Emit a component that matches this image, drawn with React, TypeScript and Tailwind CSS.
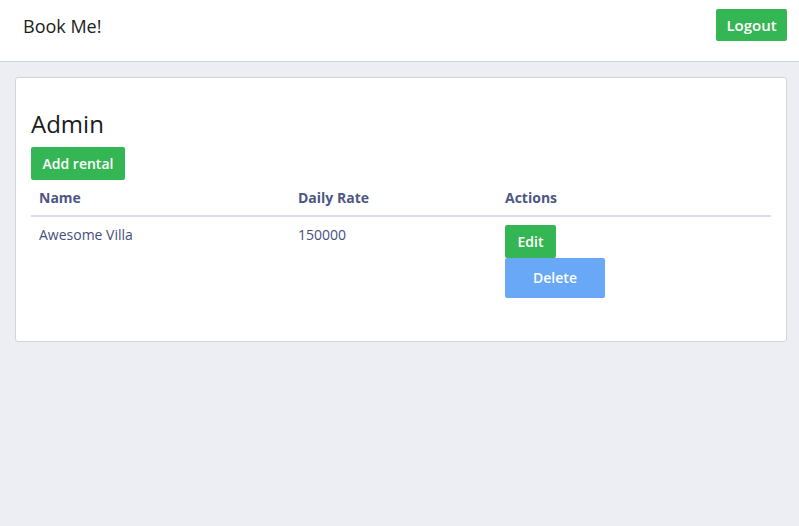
export default function App() {
  const rentals = [{ name: "Awesome Villa", dailyRate: 150000 }];

  return (
    <div
      className="min-h-[526px] bg-[#edeef3] text-[#222]"
      style={{ fontFamily: '"Open Sans", sans-serif' }}
    >
      <nav className="h-[62px] bg-white border-b border-[#cfd1d8] flex items-start justify-between pl-[23px] pr-3">
        <span className="mt-[14px] text-[18px] leading-6 text-[#1c1c1c]">Book Me!</span>
        <button className="mt-[9px] h-8 w-[71px] rounded-[2px] bg-[#35b654] text-white text-[15px] font-semibold">
          Logout
        </button>
      </nav>

      <main className="pt-[15px] pl-[15px] pr-3">
        <div className="bg-white border border-[#d3d4da] rounded-[3px] px-[15px] pt-[30px] pb-[43px]">
          <h1 className="text-[24px] leading-8 text-[#1a1a1a]">Admin</h1>
          <button className="mt-[7px] h-[33px] w-[94px] rounded-[2px] bg-[#35b654] text-white text-[14px] font-semibold">
            Add rental
          </button>
          <table className="w-full text-[14px] leading-5 text-left">
            <thead>
              <tr className="border-b-2 border-[#dcdde6]">
                <th className="w-[259px] px-2 pt-2 pb-[7px] font-bold text-[#4d5784]">Name</th>
                <th className="w-[207px] px-2 pt-2 pb-[7px] font-bold text-[#4d5784]">Daily Rate</th>
                <th className="px-2 pt-2 pb-[7px] font-bold text-[#4d5784]">Actions</th>
              </tr>
            </thead>
            <tbody>
              {rentals.map((r) => (
                <tr key={r.name} className="align-top text-[#44507c]">
                  <td className="px-2 pt-2">{r.name}</td>
                  <td className="px-2 pt-2">{r.dailyRate}</td>
                  <td className="px-2 pt-2">
                    <div className="flex flex-col items-start">
                      <button className="h-[33px] w-[51px] rounded-[2px] bg-[#35b654] text-white text-[14px] font-semibold">
                        Edit
                      </button>
                      <button className="h-10 w-[100px] rounded-[2px] bg-[#68a8f7] text-white text-[14px] font-semibold">
                        Delete
                      </button>
                    </div>
                  </td>
                </tr>
              ))}
            </tbody>
          </table>
        </div>
      </main>
    </div>
  );
}
